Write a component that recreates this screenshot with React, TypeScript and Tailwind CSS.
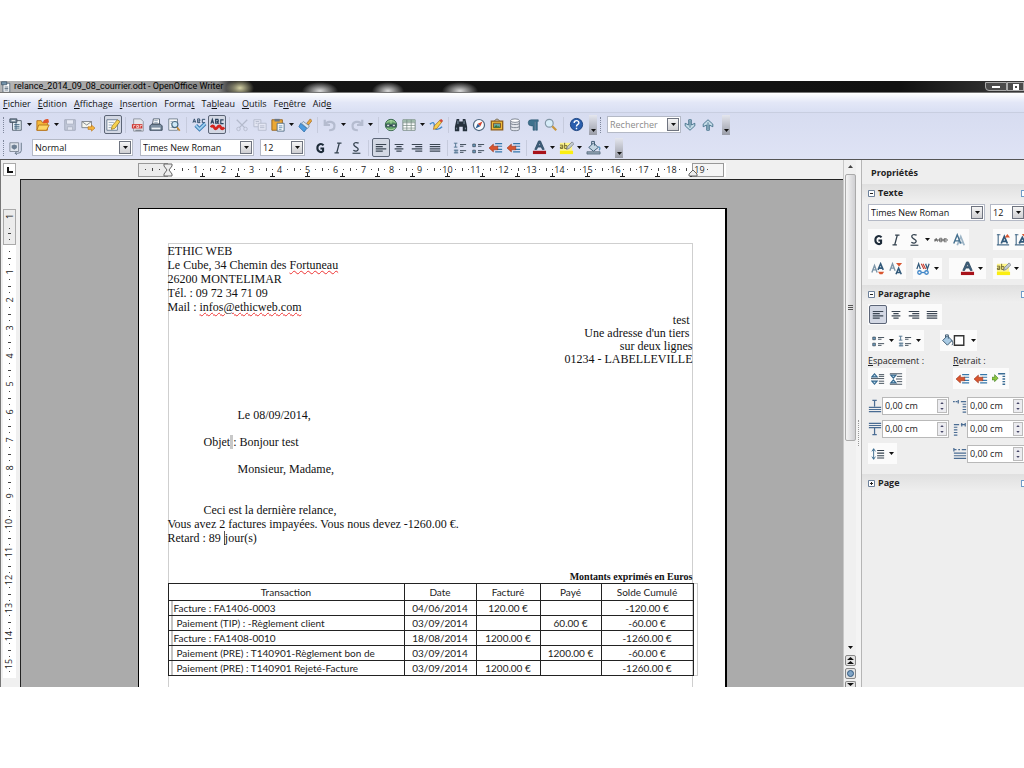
import React from "react";
import clsx from "clsx";

type IconProps = { children: React.ReactNode; className?: string };

function Icon({ children, className }: IconProps) {
  return (
    <svg
      viewBox="0 0 16 16"
      className={clsx("shrink-0", className || "h-[14px] w-[14px]")}
      fill="none"
      aria-hidden="true"
    >
      {children}
    </svg>
  );
}

function Caret() {
  return (
    <svg viewBox="0 0 5 3" className="h-[3px] w-[5px]" aria-hidden="true">
      <path d="M0 0h5L2.500 3z" fill="#111" />
    </svg>
  );
}

const icons = {
  newDoc: (
    <Icon>
      <path d="M4 3h10v11H4z" fill="#e3edf3" stroke="#4d5a68" />
      <path d="M1 1h8v4H1z" fill="#8296a6" stroke="#3c4a58" />
      <path d="M6 7.500h6M6 9.500h6M6 11.500h6" stroke="#41657e" />
      <path d="M8 5v9" stroke="#41657e" />
      <path d="M3 3h4" stroke="#fff" />
    </Icon>
  ),
  open: (
    <Icon>
      <path d="M1 3h5l1 2h6v9H1z" fill="#f5b93a" stroke="#b3701a" />
      <path d="M3 8h12l-3 6H1z" fill="#fcd765" stroke="#b3701a" />
      <path d="M8 6c0-4 2-5 6-5l1 4c-3 0-4 1-7 1z" fill="#e0552c" />
    </Icon>
  ),
  save: (
    <Icon className="h-[14px] w-[14px] opacity-60">
      <path d="M2 2h12v12H2z" fill="#b3bac8" stroke="#7b8495" />
      <path d="M4 2h8v5H4z" fill="#f2f4f8" stroke="#8f97a6" />
      <path d="M5 10h6v4H5z" fill="#e6e9f0" stroke="#8f97a6" />
    </Icon>
  ),
  mail: (
    <Icon>
      <path d="M1 4h11v7H1z" fill="#f6f6ee" stroke="#7a7f86" />
      <path d="M1 4l5.500 4L12 4" stroke="#7a7f86" />
      <path d="M8 10h4V8l4 3.500-4 3.500v-2H8z" fill="#f6b63c" stroke="#b87118" strokeWidth=".7" />
    </Icon>
  ),
  edit: (
    <Icon>
      <path d="M1 2h12v12H1z" fill="#fbfbfb" stroke="#60748a" />
      <path d="M3 5h6M3 8h4M3 11h3" stroke="#8aa2b6" />
      <path d="M6 13l1-4 6-7 3 2-6 8z" fill="#f6d24e" stroke="#8a6a1c" strokeWidth=".8" />
    </Icon>
  ),
  pdf: (
    <Icon>
      <path d="M3 1h8l3 3v11H3z" fill="#e4e7ec" stroke="#8a909b" />
      <path d="M1 7h12v5H1z" fill="#cf3a34" />
      <path d="M3 11V8.500h2M6.500 11V8.500h2V11zM10.500 11V8.500h2" stroke="#fff" strokeWidth=".8" />
      <path d="M5 14h7" stroke="#5c6672" />
    </Icon>
  ),
  print: (
    <Icon>
      <path d="M5 1h7v6H4z" fill="#fff" stroke="#4e5c6d" />
      <path d="M1 9l2-2h10l2 2v5H1z" fill="#7c8fa1" stroke="#2d3d4e" />
      <path d="M3 11h10v2H3z" fill="#eef2f5" />
      <path d="M6 3h4M6 5h4" stroke="#8da1b5" />
    </Icon>
  ),
  preview: (
    <Icon>
      <path d="M2 1h10v13H2z" fill="#f8f8f8" stroke="#6f7e8d" />
      <path d="M4 4h3M4 6h2M4 11h5" stroke="#9badc0" />
      <circle cx="9" cy="7.500" r="3.500" fill="#cfe8f7" stroke="#47687f" strokeWidth="1.300" />
      <path d="M11.500 10.500l3 4" stroke="#c68b34" strokeWidth="2" />
    </Icon>
  ),
  spell: (
    <Icon className="h-[15px] w-[15px]">
      <path d="M1 6l1.500-4L4 6M1.500 5h2M6 2v4h2.500L7 4h1.500L8 2zM14 2.500h-3V6h3" stroke="#2f4b66" />
      <path d="M4 9l4 4 6-6" stroke="#3a7ab2" strokeWidth="4" />
      <path d="M4 9l4 4 6-6" stroke="#9ed0f0" strokeWidth="2" />
    </Icon>
  ),
  autoSpell: (
    <Icon className="h-[15px] w-[15px]">
      <path d="M1 7l1.500-4.500L4 7M1.500 5.500h2M6 2.500v4h3L7.500 4.500H9l-.5-2zM14.500 3h-3v4h3" stroke="#27405a" strokeWidth="1.200" />
      <path d="M1 11q2-3 3.500 0t3.500 0 3.500 0 3.500 0" stroke="#d3251f" strokeWidth="3" />
    </Icon>
  ),
  cut: (
    <Icon className="h-[14px] w-[14px] opacity-40">
      <path d="M2 2l9 9M14 2L5 11" stroke="#7d8594" strokeWidth="1.500" />
      <circle cx="4" cy="12.500" r="2" stroke="#7d8594" />
      <circle cx="12" cy="12.500" r="2" stroke="#7d8594" />
    </Icon>
  ),
  copy: (
    <Icon className="h-[14px] w-[14px] opacity-40">
      <path d="M1 2h8v8H1z" fill="#f2f2f6" stroke="#7d8594" />
      <path d="M6 6h9v8H6z" fill="#f2f2f6" stroke="#7d8594" />
      <path d="M3 4h4M3 6h2M8 9h5M8 11h5" stroke="#7d8594" />
    </Icon>
  ),
  paste: (
    <Icon>
      <path d="M1 2h12v12H1z" fill="#eba834" stroke="#94601a" />
      <path d="M4 1h6v3H4z" fill="#6d7783" />
      <path d="M7 6h8v9H7z" fill="#f5f8fb" stroke="#4f6d86" />
      <path d="M9 9h4M9 11h4M9 13h3" stroke="#6b94b2" />
    </Icon>
  ),
  brush: (
    <Icon>
      <path d="M10 6l4-5 2 2-4 5z" fill="#e9a73a" stroke="#955f1c" strokeWidth=".7" />
      <path d="M6 4l7 5-2 3-7-6z" fill="#dce6ee" stroke="#52708a" strokeWidth=".7" />
      <path d="M3 6l7 6-3 4-6-6z" fill="#4b9ce0" stroke="#1f5c96" strokeWidth=".7" />
    </Icon>
  ),
  undo: (
    <Icon className="h-[14px] w-[14px] opacity-45">
      <path d="M2 2v6h6M2 8c3-6 12-4 11 2 0 3-3 4-6 4" stroke="#8a93a6" strokeWidth="2.500" />
    </Icon>
  ),
  redo: (
    <Icon className="h-[14px] w-[14px] opacity-45">
      <path d="M14 2v6H8M14 8C11 2 2 4 3 10c0 3 3 4 6 4" stroke="#8a93a6" strokeWidth="2.500" />
    </Icon>
  ),
  link: (
    <Icon>
      <circle cx="8" cy="8" r="6.500" fill="#66a66a" stroke="#2b5a42" />
      <path d="M3 5q5-4 10 0M3 12q5 3 10 0M8 2v4" stroke="#b7dfae" />
      <path d="M3 7h4v3H3zM9 7h4v3H9zM6 8.500h4" fill="#dce8dc" stroke="#22384a" />
    </Icon>
  ),
  table: (
    <Icon>
      <path d="M1 2h14v12H1z" fill="#fff" stroke="#71857e" />
      <path d="M1 2h14v3H1z" fill="#9fb9ab" />
      <path d="M1 5.500h14M1 8.500h14M1 11.500h14M5.500 2v12M10.500 2v12" stroke="#71857e" strokeWidth=".8" />
    </Icon>
  ),
  draw: (
    <Icon>
      <path d="M1 7q5-4 5 1t3 5 6-3" stroke="#3f86c8" strokeWidth="1.500" />
      <path d="M5 13l1-4 7-7 2 2-6 8z" fill="#f6cf4a" stroke="#a0651c" strokeWidth=".8" />
      <path d="M12 3l2-2 2 2-2 2z" fill="#d24a3a" />
    </Icon>
  ),
  find: (
    <Icon>
      <path d="M3 1h3v3h4V1h3l2 9v5h-5v-5H6v5H1v-5z" fill="#26313d" />
      <path d="M3 11v2M13 11v2M4.500 3v4M11.500 3v4" stroke="#8ba0b3" />
    </Icon>
  ),
  compass: (
    <Icon>
      <circle cx="8" cy="8" r="6.300" fill="#fafcff" stroke="#50677e" strokeWidth="1.400" />
      <path d="M12 4L9.500 9.500l-3-3z" fill="#d6432c" />
      <path d="M4 12l5.500-2.500-3-3z" fill="#2d5f95" />
    </Icon>
  ),
  gallery: (
    <Icon>
      <path d="M5 3l3-2 3 2" stroke="#6f5a2d" />
      <path d="M1.500 3.500h13v10h-13z" fill="#f1bd3a" stroke="#8d5d1c" strokeWidth="1.500" />
      <path d="M4 6h8v5H4z" fill="#69a7a0" stroke="#7e4e24" />
      <path d="M4 11l3-3 2 2 1-1 2 2z" fill="#36773b" />
    </Icon>
  ),
  database: (
    <Icon>
      <path d="M3 3v10c0 2 10 2 10 0V3" fill="#e2e5ea" stroke="#737c88" />
      <ellipse cx="8" cy="3" rx="5" ry="2" fill="#fff" stroke="#737c88" />
      <path d="M3 6c0 2 10 2 10 0M3 9.500c0 2 10 2 10 0" stroke="#737c88" />
    </Icon>
  ),
  pilcrow: (
    <Icon>
      <path d="M14 2H6a3.500 3.500 0 000 7h2v5h2V4h1v10h2V4h1z" fill="#3d718d" stroke="#26506b" strokeWidth=".6" />
    </Icon>
  ),
  zoom: (
    <Icon>
      <circle cx="6" cy="6" r="4.500" fill="#d6ecf8" stroke="#8296a6" strokeWidth="1.300" />
      <path d="M9.500 9.500L14 14" stroke="#c8963c" strokeWidth="2.500" />
    </Icon>
  ),
  help: (
    <Icon className="h-[15px] w-[15px]">
      <circle cx="8" cy="8" r="6.500" fill="#2a5fae" stroke="#183f7c" />
      <path d="M5.500 6.500c0-4 5.500-3 5 0-.3 1.500-2.500 1.500-2.500 3.500M8 11.500v1.500" stroke="#fff" strokeWidth="1.500" />
    </Icon>
  ),
  findNext: (
    <Icon>
      <path d="M6.500 2h3v6l4-2v3L8 14 2.500 9V6l4 2z" fill="#c5dce8" stroke="#3d6b85" />
      <path d="M8 3v8" stroke="#3d6b85" />
    </Icon>
  ),
  findPrev: (
    <Icon>
      <path d="M6.500 14h3V8l4 2V7L8 2 2.500 7v3l4-2z" fill="#c5dce8" stroke="#3d6b85" />
      <path d="M8 5v8" stroke="#3d6b85" />
    </Icon>
  ),
  styles: (
    <Icon>
      <path d="M1 2h10v10H1z" fill="#dfe4ec" stroke="#7b8594" />
      <path d="M3 8V5l3-1 3 1v3l-3 2z" fill="#6d7f93" />
      <path d="M14 2v9q0 3-4 3H7M9 12l-2 2 2 2" stroke="#5a6b7d" />
    </Icon>
  ),
  bold: (
    <Icon>
      <path d="M12 5C10 2.500 5 3 5 8s5 5.500 6.500 3.500V8.500H8.500" stroke="#1d2b39" strokeWidth="2.400" />
    </Icon>
  ),
  italic: (
    <Icon>
      <path d="M7 2.500h5M4 13.500h5M9.500 2.500l-3 11" stroke="#33414e" strokeWidth="1.500" />
    </Icon>
  ),
  underline: (
    <Icon>
      <path d="M11 2.500C8 1 5 2 5.500 4.500S11 7 10.500 9.500 7 12 5 10.500" stroke="#33414e" strokeWidth="1.500" />
      <path d="M4 14h9" stroke="#33414e" strokeWidth="1.300" />
    </Icon>
  ),
  alignLeft: (
    <Icon>
      <path d="M2 4h12M2 6.500h8M2 9h12M2 11.500h8" stroke="#3b4653" strokeWidth="1.300" />
    </Icon>
  ),
  alignCenter: (
    <Icon>
      <path d="M3 4h10M5 6.500h6M3 9h10M5 11.500h6" stroke="#3b4653" strokeWidth="1.300" />
    </Icon>
  ),
  alignRight: (
    <Icon>
      <path d="M2 4h12M6 6.500h8M2 9h12M6 11.500h8" stroke="#3b4653" strokeWidth="1.300" />
    </Icon>
  ),
  alignJustify: (
    <Icon>
      <path d="M2 4h12M2 6.500h12M2 9h12M2 11.500h12" stroke="#3b4653" strokeWidth="1.300" />
    </Icon>
  ),
  numbering: (
    <Icon>
      <path d="M1 2.500h4M3 2.500V7M1 7h4M1 10.500h5M1 13.500h5M2.500 10v4M4.500 10v4" stroke="#4b6f8c" />
      <path d="M8 4h7M8 6h4M8 11h7M8 13h4" stroke="#33414e" />
    </Icon>
  ),
  bullets: (
    <Icon>
      <path d="M2 3.500h3v3H2zM2 10.500h3v3H2z" fill="#6b9fc4" stroke="#33414e" strokeWidth=".8" />
      <path d="M8 4h7M8 6h4M8 11h7M8 13h4" stroke="#33414e" />
    </Icon>
  ),
  outdent: (
    <Icon>
      <path d="M7 3h8M9 6h6M9 9.500h6M7 12.500h8" stroke="#3577ab" strokeWidth="1.400" />
      <path d="M0 8l5-4.500v2.500h5v4H5v2.500z" fill="#d9552f" stroke="#8f2c16" strokeWidth=".6" />
    </Icon>
  ),
  fontColor: (
    <Icon className="h-[15px] w-[15px]">
      <path d="M3 10l4-9h2l4 9h-2l-1-2.500H6L5 10zM6.700 6h2.600L8 3z" fill="#41637f" stroke="#25415a" strokeWidth=".8" />
      <path d="M1 11.500h14v3.500H1z" fill="#a8121a" />
    </Icon>
  ),
  highlight: (
    <Icon className="h-[15px] w-[15px]">
      <path d="M1 3h13v12H1z" fill="#fdf58a" />
      <path d="M1 11.500h14v3.500H1z" fill="#fbee12" />
      <path d="M1 5.500h3V9H1.500V7.500H4M6 3v6h2.500V6H6" stroke="#5f5626" strokeWidth=".9" />
      <path d="M8 10l1-3 5-5 2 2-5 5z" fill="#c2cad0" stroke="#6b7178" strokeWidth=".7" />
    </Icon>
  ),
  fill: (
    <Icon className="h-[15px] w-[15px]">
      <path d="M3 8l5-5 5 5-5 4z" fill="#c4d6e3" stroke="#3a5770" />
      <path d="M6 5V1.500h3V6" stroke="#3a5770" />
      <path d="M13 7q3 1 1 4" stroke="#5b94bd" strokeWidth="1.500" />
      <path d="M1 12.500h14V15H1z" fill="#8fa3b4" stroke="#45586a" strokeWidth=".7" />
    </Icon>
  ),
  strike: (
    <Icon>
      <path d="M1 10l1.500-4L4 10M6.500 6v4h2.500V6zM14.500 6.500h-3V10h3" stroke="#555" strokeWidth=".9" />
      <path d="M0 8h16" stroke="#444" />
    </Icon>
  ),
  shadow: (
    <Icon>
      <path d="M6 14l4-10 4 10M7.500 11h5" stroke="#9fb6c7" strokeWidth="2" />
      <path d="M2 12l4-10 4 10M3.500 9h5" stroke="#45708f" strokeWidth="1.600" />
    </Icon>
  ),
  grow: (
    <Icon>
      <path d="M2.500 1v13M1 2h4M1 13.500h14" stroke="#4b6f8c" strokeWidth="1.300" />
      <path d="M6 12l3.500-8 3.500 8M7 9.500h5" stroke="#31597a" strokeWidth="2" />
      <path d="M10 5l3-4 3 4z" fill="#d9552f" />
    </Icon>
  ),
  shrink: (
    <Icon>
      <path d="M2.500 1v13M1 2h4M1 13.500h14" stroke="#4b6f8c" strokeWidth="1.300" />
      <path d="M6 12l3.500-7 3.500 7M7 10h5" stroke="#31597a" strokeWidth="2" />
      <path d="M9 1h6l-3 4z" fill="#d9552f" />
    </Icon>
  ),
  superscript: (
    <Icon>
      <path d="M1 12l3-8 3 8M2 9h4" stroke="#7d96a9" strokeWidth="1.600" />
      <path d="M8 9l3-7 3 7M9 7h4" stroke="#31597a" strokeWidth="1.800" />
      <path d="M8 11h7l-2 3h-3z" fill="#d9552f" />
    </Icon>
  ),
  subscript: (
    <Icon>
      <path d="M1 10l3-8 3 8M2 7h4" stroke="#7d96a9" strokeWidth="1.600" />
      <path d="M8 14l3-7 3 7M9 12h4" stroke="#31597a" strokeWidth="1.800" />
      <path d="M8 1h7l-3.500 4z" fill="#d9552f" />
    </Icon>
  ),
  spacing: (
    <Icon>
      <path d="M1 8l2-6 2 6M11 2l2 6 2-6" stroke="#31597a" strokeWidth="1.400" />
      <path d="M6 2l3 6M8 2l3 6" stroke="#c43a2c" strokeWidth="1.200" />
      <circle cx="4" cy="12" r="2" stroke="#3f86c8" strokeWidth="1.500" />
      <circle cx="12" cy="12" r="2" stroke="#3f86c8" strokeWidth="1.500" />
      <path d="M6 12h4" stroke="#3f86c8" strokeWidth="1.500" />
    </Icon>
  ),
  backColor: (
    <Icon className="h-[15px] w-[24px]">
      <path d="M-3 8l5-5 5 5-5 5z" fill="#a9cbe4" stroke="#3a5770" />
      <path d="M0 5V2h3v4M6 8q3 1 1 5" stroke="#3a5770" />
      <path d="M9.500 3h10v10h-10z" fill="#fff" stroke="#333" strokeWidth="1.500" />
    </Icon>
  ),
  increaseSpace: (
    <Icon>
      <path d="M4 2l3 3.500H1zM4 14l3-3.500H1z" fill="#b8d8ec" stroke="#31658c" strokeWidth="1.300" />
      <path d="M0 7.500h15M9 3h6M9 5h6M9 10.500h6M9 13h6" stroke="#33414e" />
    </Icon>
  ),
  decreaseSpace: (
    <Icon>
      <path d="M5 7L2 3.500h6zM5 9l-3 3.500h6z" fill="#b8d8ec" stroke="#31658c" strokeWidth="1.300" />
      <path d="M1 2h14M1 14h14M9 5h6M8 8h7M9 11h6" stroke="#33414e" />
    </Icon>
  ),
  hanging: (
    <Icon>
      <path d="M0 6h3V3l4 4-4 4V9H0z" fill="#8cc63f" stroke="#3f7d1e" strokeWidth=".7" />
      <path d="M7 2h8M12 5h3M12 8h3M12 11h3M12 14h3" stroke="#3a6c94" strokeWidth="1.500" />
    </Icon>
  ),
  above: (
    <Icon>
      <path d="M5 1.500h5M7.500 1.500v7M1 9.500h14M1 12h14M1 14.500h14" stroke="#4a6c93" strokeWidth="1.400" />
    </Icon>
  ),
  below: (
    <Icon>
      <path d="M1 1.500h14M1 4h14M1 6.500h14M7.500 7v7M5 14.500h5" stroke="#4a6c93" strokeWidth="1.400" />
    </Icon>
  ),
  before: (
    <Icon>
      <path d="M0 3h2M3 3h2M6 1v4M9 3h6M11 6h4M11 9h4M11 12h4M11 15h4" stroke="#4a6c93" strokeWidth="1.400" />
    </Icon>
  ),
  after: (
    <Icon>
      <path d="M1 3h6M1 6h4M1 9h4M1 12h4M1 15h4M9 3h5M10 1v4M14 1v4" stroke="#4a6c93" strokeWidth="1.400" />
    </Icon>
  ),
  firstLine: (
    <Icon>
      <path d="M1 3h3M6 3h2M10 3h5M1 1v4M1 7h14M1 10h14M1 13h14" stroke="#4a6c93" strokeWidth="1.400" />
    </Icon>
  ),
  lineSpacing: (
    <Icon>
      <path d="M3 2v12M1 5l2-3 2 3M1 11l2 3 2-3" stroke="#31658c" />
      <path d="M7 4h8M7 7h8M7 10h8M7 12.500h8" stroke="#33414e" strokeWidth="1.200" />
    </Icon>
  ),
};

type IconName = keyof typeof icons;

type ToolProps = { icon: IconName; label: string; pressed?: boolean; menu?: boolean };

function Tool({ icon, label, pressed, menu }: ToolProps) {
  return (
    <>
      <button
        type="button"
        aria-label={label}
        aria-pressed={pressed}
        className={clsx(
          "flex h-[19px] w-[18px] shrink-0 items-center justify-center",
          pressed && "rounded-xs border border-[#5c6577] bg-[#d3d8e4]"
        )}
      >
        {icons[icon]}
      </button>
      {menu && (
        <button
          type="button"
          aria-label={`${label} : options`}
          className="flex h-[19px] w-[9px] shrink-0 items-center justify-center"
        >
          <Caret />
        </button>
      )}
    </>
  );
}

function Separator() {
  return (
    <span className="flex h-4 w-[7px] shrink-0 justify-center">
      <span className="w-px bg-[#c6cbdd]" />
    </span>
  );
}

function Grip() {
  return (
    <span className="flex w-[7px] shrink-0 pl-[3px]">
      <span className="h-4 border-l border-dotted border-[#7f879c]" />
    </span>
  );
}

function Overflow() {
  return (
    <button
      type="button"
      aria-label="Autres boutons"
      className="flex h-[20px] w-2 shrink-0 items-end justify-center bg-linear-to-b from-[#e4e6ee] to-[#9a9da8] pb-[3px]"
    >
      <Caret />
    </button>
  );
}

type ComboProps = { label: string; value: string; className?: string };

function Combo({ label, value, className }: ComboProps) {
  return (
    <span className={clsx("flex h-[17px] shrink-0 border border-[#b4b9c6] bg-white p-px", className)}>
      <select
        aria-label={label}
        defaultValue={value}
        className="w-full min-w-0 flex-1 appearance-none bg-transparent pl-px text-[9px] leading-[13px] outline-none"
      >
        <option>{value}</option>
      </select>
      <span className="pointer-events-none flex w-3 shrink-0 items-center justify-center border border-[#6f7480] bg-linear-to-b from-[#f6f6f6] to-[#cfcfd2]">
        <Caret />
      </span>
    </span>
  );
}

const menus: [string, string, string][] = [
  ["", "F", "ichier"],
  ["", "É", "dition"],
  ["", "A", "ffichage"],
  ["", "I", "nsertion"],
  ["Forma", "t", ""],
  ["Ta", "b", "leau"],
  ["", "O", "utils"],
  ["Fe", "n", "être"],
  ["Aid", "e", ""],
];

function TitleBar() {
  return (
    <header className="flex h-[11px] items-center overflow-hidden bg-[radial-gradient(ellipse_14px_9px_at_240px_7px,#d4d1a4,transparent),radial-gradient(ellipse_18px_9px_at_320px_10px,#ddd,transparent),radial-gradient(ellipse_16px_9px_at_388px_10px,#ddd,transparent),radial-gradient(ellipse_18px_9px_at_460px_10px,#ddd,transparent),linear-gradient(90deg,#b5b5b5,#a2a2a2_130px,#858585_218px,#161616_236px,#111_900px,#3a3a3a)]">
      <Icon className="h-[12px] w-[12px]">
        <path d="M4 3h9v12H4z" fill="#fff" stroke="#3d5468" />
        <path d="M2 1h7v4H2z" fill="#7595ac" stroke="#3d5468" />
        <path d="M6 8h5M6 10h5M6 12h5" stroke="#3d5468" />
      </Icon>
      <h1 className="pl-[2px] font-['Roboto',sans-serif] text-[9px] leading-[11px] whitespace-nowrap text-black">
        relance_2014_09_08_courrier.odt - OpenOffice Writer
      </h1>
      <div className="ml-auto flex">
        <button
          type="button"
          aria-label="Réduire"
          className="flex h-[9px] w-[22px] items-center justify-center rounded-bl-sm border border-[#aaa] bg-[#4b4b4b]"
        >
          <span className="h-[2px] w-2 bg-white" />
        </button>
        <button
          type="button"
          aria-label="Agrandir"
          className="flex h-[9px] w-[17px] items-center justify-center border border-[#aaa] bg-[#4b4b4b]"
        >
          <span className="h-[6px] w-[6px] border-2 border-white" />
        </button>
      </div>
    </header>
  );
}

function Toolbars() {
  return (
    <div className="border-b border-[#555] bg-linear-to-b from-[#d3d9ee] to-[#dfe3f5]">
      <nav className="flex h-[21px] items-center gap-[7px] border-t border-[#777] border-b border-b-[#c8cee0] bg-linear-to-b from-white via-[#e3e7f7] to-[#d9dff3] px-[3px] pt-[2px]">
        {menus.map(([before, key, after]) => (
          <button key={before + key + after} type="button" className="text-[9px] leading-[12px] text-[#111]">
            {before}
            <span className="underline">{key}</span>
            {after}
          </button>
        ))}
      </nav>

      <div className="flex h-[23px] items-center">
        <Grip />
        <Tool icon="newDoc" label="Nouveau" menu />
        <Tool icon="open" label="Ouvrir" menu />
        <Tool icon="save" label="Enregistrer" />
        <Tool icon="mail" label="Document par e-mail" />
        <Separator />
        <Tool icon="edit" label="Éditer le fichier" pressed />
        <Separator />
        <Tool icon="pdf" label="Exporter au format PDF" />
        <Tool icon="print" label="Imprimer" />
        <Tool icon="preview" label="Aperçu" />
        <Separator />
        <Tool icon="spell" label="Orthographe et grammaire" />
        <Tool icon="autoSpell" label="Vérification automatique" pressed />
        <Separator />
        <Tool icon="cut" label="Couper" />
        <Tool icon="copy" label="Copier" />
        <Tool icon="paste" label="Coller" menu />
        <Tool icon="brush" label="Appliquer le format" />
        <Separator />
        <Tool icon="undo" label="Annuler" menu />
        <Tool icon="redo" label="Restaurer" menu />
        <Separator />
        <Tool icon="link" label="Hyperlien" />
        <Tool icon="table" label="Tableau" menu />
        <Tool icon="draw" label="Dessin" />
        <Separator />
        <Tool icon="find" label="Rechercher et remplacer" />
        <Tool icon="compass" label="Navigateur" />
        <Tool icon="gallery" label="Gallery" />
        <Tool icon="database" label="Sources de données" />
        <Tool icon="pilcrow" label="Caractères non imprimables" />
        <Tool icon="zoom" label="Zoom" />
        <Separator />
        <Tool icon="help" label="Aide" />
        <span className="pl-1">
          <Overflow />
        </span>
        <Grip />
        <span className="ml-[3px] flex h-[17px] w-[74px] border border-[#b4b9c6] bg-white p-px">
          <input
            type="text"
            aria-label="Rechercher"
            placeholder="Rechercher"
            className="min-w-0 flex-1 pl-px text-[9px] leading-[13px] outline-none placeholder:text-[#8b8b8b]"
          />
          <button
            type="button"
            aria-label="Recherches récentes"
            className="flex w-3 items-center justify-center border border-[#6f7480] bg-linear-to-b from-[#f6f6f6] to-[#cfcfd2]"
          >
            <Caret />
          </button>
        </span>
        <Tool icon="findNext" label="Suivant" />
        <Tool icon="findPrev" label="Précédent" />
        <span className="pl-[5px]">
          <Overflow />
        </span>
      </div>

      <div className="flex h-[23px] items-center">
        <Grip />
        <Tool icon="styles" label="Styles et formatage" />
        <Combo label="Appliquer le style" value="Normal" className="ml-[7px] w-[101px]" />
        <Combo label="Nom de police" value="Times New Roman" className="ml-[7px] w-[114px]" />
        <Combo label="Taille de police" value="12" className="ml-[6px] w-[45px]" />
        <span className="flex pl-[6px]">
          <Tool icon="bold" label="Gras" />
          <Tool icon="italic" label="Italique" />
          <Tool icon="underline" label="Souligné" />
        </span>
        <Separator />
        <Tool icon="alignLeft" label="Aligner à gauche" pressed />
        <Tool icon="alignCenter" label="Centrer" />
        <Tool icon="alignRight" label="Aligner à droite" />
        <Tool icon="alignJustify" label="Justifier" />
        <Separator />
        <Tool icon="numbering" label="Numérotation" />
        <Tool icon="bullets" label="Puces" />
        <Tool icon="outdent" label="Diminuer le retrait" />
        <Tool icon="outdent" label="Augmenter le retrait" />
        <Separator />
        <Tool icon="fontColor" label="Couleur de police" menu />
        <Tool icon="highlight" label="Surlignage" menu />
        <Tool icon="fill" label="Arrière-plan" menu />
        <span className="pl-1">
          <Overflow />
        </span>
      </div>
    </div>
  );
}

const range = (n: number) => Array.from({ length: n }, (_, i) => i + 1);

function HorizontalRuler() {
  return (
    <div className="relative mx-auto flex h-[14px] w-[588px] bg-white text-[9px] leading-[14px] text-[#222]">
      <span className="flex w-[30px] shrink-0 items-center justify-around border border-[#999] bg-[#ececec] px-1">
        <i className="h-px w-px bg-[#444]" />
        <i className="h-[3px] w-px bg-[#444]" />
        <i className="h-px w-px bg-[#444]" />
      </span>
      <span className="flex w-[14px] shrink-0 items-center justify-center">
        <i className="h-px w-px bg-[#444]" />
      </span>
      {range(19).map((n) => (
        <span key={n} className="grid w-7 shrink-0 grid-cols-[7px_14px_7px] items-center">
          <span className="flex items-center justify-between">
            <i className="h-[3px] w-px bg-[#444]" />
            <i className="h-px w-px bg-[#444]" />
          </span>
          <span className="flex justify-center">{n}</span>
          <i className="h-px w-px bg-[#444]" />
        </span>
      ))}
      {/* default tab stops */}
      <div className="absolute bottom-0 left-[47px] flex">
        {range(15).map((n) => (
          <svg key={n} viewBox="0 0 35 4" className="h-1 w-[35px]" aria-hidden="true">
            <path d="M17.500 0v3M15 3.500h5" stroke="#222" />
          </svg>
        ))}
      </div>
      <span className="absolute inset-y-0 right-[2px] w-[32px] border border-[#999] bg-[#999]/10" />
      {/* indent markers */}
      <svg viewBox="0 0 10 14" className="absolute left-[25px] h-[14px] w-[10px]" aria-hidden="true">
        <path d="M1 1h8v2L6 7l3 4v2H1v-2l3-4-3-4z" fill="#eee" stroke="#666" />
      </svg>
      <svg viewBox="0 0 10 14" className="absolute right-[28px] h-[14px] w-[10px]" aria-hidden="true">
        <path d="M5 7l4 4v2H1v-2z" fill="#eee" stroke="#666" />
      </svg>
    </div>
  );
}

function VerticalRuler() {
  return (
    <div className="flex w-5 shrink-0 flex-col border-l border-[#777] bg-[#f0f0f0] pt-[30px] pl-[2px]">
      <div className="flex w-[13px] flex-col bg-white text-[9px] leading-[13px] text-[#222]">
        <span className="flex h-9 flex-col items-center justify-between border border-[#aaa] bg-[#ececec] pb-1">
          <span className="-rotate-90">1</span>
          <i className="h-px w-px bg-[#444]" />
          <i className="h-px w-[3px] bg-[#444]" />
          <i className="h-px w-px bg-[#444]" />
        </span>
        <span className="flex h-[13px] items-center justify-center">
          <i className="h-px w-px bg-[#444]" />
        </span>
        {range(15).map((n) => (
          <span key={n} className="grid h-7 grid-rows-[7px_14px_7px] justify-items-center">
            <span className="flex flex-col items-center justify-between">
              <i className="h-px w-[3px] bg-[#444]" />
              <i className="h-px w-px bg-[#444]" />
            </span>
            <span className="-rotate-90">{n}</span>
            <i className="h-px w-px bg-[#444]" />
          </span>
        ))}
      </div>
    </div>
  );
}

const rows = [
  { label: "Facture : FA1406-0003", date: "04/06/2014", billed: "120.00 €", paid: "", total: "-120.00 €" },
  { label: "Paiement (TIP) : -Règlement client", date: "03/09/2014", billed: "", paid: "60.00 €", total: "-60.00 €" },
  { label: "Facture : FA1408-0010", date: "18/08/2014", billed: "1200.00 €", paid: "", total: "-1260.00 €" },
  { label: "Paiement (PRE) : T140901-Règlement bon de", date: "03/09/2014", billed: "", paid: "1200.00 €", total: "-60.00 €" },
  { label: "Paiement (PRE) : T140901 Rejeté-Facture", date: "03/09/2014", billed: "1200.00 €", paid: "", total: "-1260.00 €" },
];

function InvoiceTable() {
  return (
    <div className="-mr-[6px] flex">
      <table className="w-[526px] table-fixed border-collapse text-center font-['Lato',sans-serif] text-[10px] leading-[14px] text-[#222]">
        <colgroup>
          <col className="w-[236px]" />
          <col className="w-[72px]" />
          <col className="w-[64px]" />
          <col className="w-[61px]" />
          <col />
        </colgroup>
        <thead>
          <tr className="h-[17px]">
            {["Transaction", "Date", "Facturé", "Payé", "Solde Cumulé"].map((title) => (
              <th key={title} className="border border-[#222] p-0 font-normal">
                {title}
              </th>
            ))}
          </tr>
        </thead>
        <tbody>
          {rows.map((row) => (
            <tr key={row.label}>
              <td className="border border-[#222] p-0 text-left">
                <span
                  className={clsx(
                    "ml-[2px] block border-l-2 border-[#c4c4c4]",
                    row.label.startsWith("Paiement") ? "pl-[4px]" : "pl-px"
                  )}
                >
                  {row.label}
                </span>
              </td>
              <td className="border border-[#222] p-0">{row.date}</td>
              <td className="border border-[#222] p-0">{row.billed}</td>
              <td className="border border-[#222] p-0">{row.paid}</td>
              <td className="border border-[#222] p-0">{row.total}</td>
            </tr>
          ))}
        </tbody>
      </table>
      <span className="w-1 border-y border-r border-[#ccc]" />
    </div>
  );
}

function Letter() {
  return (
    <article className="mx-auto w-[589px] border border-r-2 border-b-0 border-black bg-white px-[29px] pt-[34px] font-['Liberation_Serif',serif] text-[12px] leading-[14px] text-[#111]">
      <div className="w-[525px] border border-b-0 border-[#cfcfcf] pb-[11px]">
        <div className="-mx-px">
          <p>ETHIC WEB</p>
          <p>
            Le Cube, 34 Chemin des{" "}
            <span className="underline decoration-[#e33] decoration-wavy decoration-1">Fortuneau</span>
          </p>
          <p>26200 MONTELIMAR</p>
          <p>Tél. : 09 72 34 71 09</p>
          <p>
            Mail : <span className="underline decoration-[#e33] decoration-wavy decoration-1">infos@ethicweb.com</span>
          </p>
          <div className="text-right leading-[13px] whitespace-pre">
            <p>{"test "}</p>
            <p>{"Une adresse d'un tiers "}</p>
            <p>sur deux lignes</p>
            <p>01234 - LABELLEVILLE</p>
          </div>
          <p className="pt-[42px] pl-[70px]">Le 08/09/2014,</p>
          <p className="pt-[13px] pl-[36px]">
            Objet<span className="bg-[#c8c8c8]">&nbsp;</span>: Bonjour test
          </p>
          <p className="pt-[13px] pl-[70px]">Monsieur, Madame,</p>
          <p className="pt-[27px] pl-[36px]">Ceci est la dernière relance,</p>
          <p>Vous avez 2 factures impayées. Vous nous devez -1260.00 €.</p>
          <p>
            Retard : 89 <span className="border-l border-[#555]">jour(s)</span>
          </p>
          <p className="pt-[25px] text-right text-[10px] leading-[13px] font-bold">Montants exprimés en Euros</p>
          <InvoiceTable />
        </div>
      </div>
    </article>
  );
}

function ScrollBar() {
  return (
    <div className="flex w-[13px] shrink-0 flex-col items-center border-l border-[#c8c8c8] bg-[#f0f0f0] pt-[5px]">
      <svg viewBox="0 0 5 3" className="h-[3px] w-[5px]" aria-hidden="true">
        <path d="M0 3h5L2.500 0z" fill="#444" />
      </svg>
      <div className="mt-[6px] flex h-[267px] w-[11px] flex-col items-center justify-center gap-px rounded-xs border border-[#aaa] bg-linear-to-r from-[#f4f4f4] to-[#cfcfd2]">
        <i className="h-px w-[5px] bg-[#555]" />
        <i className="h-px w-[5px] bg-[#555]" />
        <i className="h-px w-[5px] bg-[#555]" />
      </div>
      <div className="mt-auto flex flex-col items-center gap-[2px]">
        <span className="pb-1">
          <Caret />
        </span>
        <button
          type="button"
          aria-label="Page précédente"
          className="flex h-[11px] w-[11px] items-center justify-center rounded-xs border border-[#888] bg-[#e4e4e4]"
        >
          <svg viewBox="0 0 7 8" className="h-2 w-[7px]" aria-hidden="true">
            <path d="M3.500 0L7 3H0zM3.500 4L7 7H0z" fill="#111" />
          </svg>
        </button>
        <button
          type="button"
          aria-label="Navigation"
          className="flex h-[11px] w-[11px] items-center justify-center rounded-xs border border-[#888] bg-[#e4e4e4]"
        >
          <span className="h-[7px] w-[7px] rounded-full border border-[#335a80] bg-[#7fa3c4]" />
        </button>
        <button
          type="button"
          aria-label="Page suivante"
          className="flex h-[6px] w-[11px] items-start justify-center overflow-hidden rounded-t-xs border border-b-0 border-[#888] bg-[#e4e4e4]"
        >
          <svg viewBox="0 0 7 8" className="h-2 w-[7px] shrink-0" aria-hidden="true">
            <path d="M0 1h7L3.500 4zM0 5h7L3.500 8z" fill="#111" />
          </svg>
        </button>
      </div>
    </div>
  );
}

function SectionTitle({ title, open }: { title: string; open?: boolean }) {
  return (
    <h3 className="flex h-[18px] items-center gap-[3px] bg-linear-to-b from-[#e0e0e0] to-[#efefef] pl-[6px] text-[9px] font-bold text-[#222]">
      <svg viewBox="0 0 7 7" className="h-[7px] w-[7px]" aria-hidden="true">
        <path d="M.5.5h6v6h-6z" fill="#fff" stroke="#6b7f99" />
        <path d={open ? "M2 3.500h3" : "M2 3.500h3M3.500 2v3"} stroke="#222" />
      </svg>
      {title}
      <span className="ml-auto h-[7px] w-[3px] border border-r-0 border-[#6f9cc9] bg-white" />
    </h3>
  );
}

function Group({ children }: { children: React.ReactNode }) {
  return <div className="flex h-[21px] shrink-0 items-center bg-[#fbfbfb] px-px">{children}</div>;
}

function Spin({ icon, label, className }: { icon: IconName; label: string; className: string }) {
  return (
    <span className="flex shrink-0 items-center">
      {icons[icon]}
      <span className={clsx("flex h-[18px] shrink-0 border border-[#b9b9b9] bg-white p-px", className)}>
        <input
          type="text"
          aria-label={label}
          defaultValue="0,00 cm"
          className="min-w-0 flex-1 pl-px text-[9px] leading-[14px] text-[#222] outline-none"
        />
        <span className="flex w-[10px] shrink-0 flex-col items-center justify-around border border-[#bbb] bg-[#ececf0]">
          <svg viewBox="0 0 5 3" className="h-[2px] w-[4px]" aria-hidden="true">
            <path d="M0 3h5L2.500 0z" fill="#446" />
          </svg>
          <svg viewBox="0 0 5 3" className="h-[2px] w-[4px]" aria-hidden="true">
            <path d="M0 0h5L2.500 3z" fill="#446" />
          </svg>
        </span>
      </span>
    </span>
  );
}

function Sidebar() {
  return (
    <aside className="w-[163px] shrink-0 overflow-hidden border-l border-[#b5b5b5] bg-[#eee]">
      <h2 className="flex h-6 items-center pt-px pl-[9px] text-[9px] font-bold text-[#222]">Propriétés</h2>

      <SectionTitle title="Texte" open />
      <div className="flex flex-col gap-2 pt-[2px] pb-[6px] pl-[6px]">
        <div className="flex gap-[5px]">
          <Combo label="Police" value="Times New Roman" className="w-[117px]" />
          <Combo label="Taille" value="12" className="w-[36px]" />
        </div>
        <div className="flex gap-6">
          <Group>
            <Tool icon="bold" label="Gras" />
            <Tool icon="italic" label="Italique" />
            <Tool icon="underline" label="Souligné" menu />
            <Tool icon="strike" label="Barré" />
            <Tool icon="shadow" label="Ombre" />
          </Group>
          <Group>
            <Tool icon="grow" label="Agrandir la police" />
            <Tool icon="shrink" label="Réduire la police" />
          </Group>
        </div>
        <div className="flex gap-[7px]">
          <Group>
            <Tool icon="superscript" label="Exposant" />
            <Tool icon="subscript" label="Indice" />
          </Group>
          <Group>
            <Tool icon="spacing" label="Espacement des caractères" menu />
          </Group>
          <Group>
            <span className="w-2" />
            <Tool icon="fontColor" label="Couleur de police" menu />
          </Group>
          <Group>
            <Tool icon="highlight" label="Surlignage" menu />
          </Group>
        </div>
      </div>

      <SectionTitle title="Paragraphe" open />
      <div className="flex flex-col gap-[5px] pt-px pb-[10px] pl-[6px]">
        <div className="flex">
          <Group>
            <Tool icon="alignLeft" label="Aligner à gauche" pressed />
            <Tool icon="alignCenter" label="Centrer" />
            <Tool icon="alignRight" label="Aligner à droite" />
            <Tool icon="alignJustify" label="Justifier" />
          </Group>
        </div>
        <div className="flex gap-4">
          <Group>
            <Tool icon="bullets" label="Puces" menu />
            <Tool icon="numbering" label="Numérotation" menu />
          </Group>
          <Group>
            <button type="button" aria-label="Couleur d'arrière-plan" className="flex h-[19px] items-center gap-[6px]">
              {icons.backColor}
              <Caret />
            </button>
          </Group>
        </div>
        <div className="flex text-[9px] leading-[10px] text-[#222]">
          <div className="w-[85px] shrink-0">
            <p>
              <span className="underline">E</span>spacement :
            </p>
            <div className="flex pt-[2px]">
              <Group>
                <Tool icon="increaseSpace" label="Augmenter l'espacement" />
                <Tool icon="decreaseSpace" label="Diminuer l'espacement" />
              </Group>
            </div>
          </div>
          <div>
            <p>
              <span className="underline">R</span>etrait :
            </p>
            <div className="flex pt-[2px]">
              <Group>
                <Tool icon="outdent" label="Augmenter le retrait" />
                <Tool icon="outdent" label="Diminuer le retrait" />
                <Tool icon="hanging" label="Retrait négatif" />
              </Group>
            </div>
          </div>
        </div>
        <div className="flex gap-1 pt-[3px]">
          <Spin icon="above" label="Espacement au-dessus" className="w-[67px]" />
          <Spin icon="before" label="Retrait avant le texte" className="w-[58px]" />
        </div>
        <div className="flex gap-1">
          <Spin icon="below" label="Espacement en dessous" className="w-[67px]" />
          <Spin icon="after" label="Retrait après le texte" className="w-[58px]" />
        </div>
        <div className="flex">
          <div className="flex w-[85px] shrink-0">
            <Group>
              <Tool icon="lineSpacing" label="Interligne" menu />
            </Group>
          </div>
          <Spin icon="firstLine" label="Retrait de première ligne" className="w-[58px]" />
        </div>
      </div>

      <SectionTitle title="Page" />
    </aside>
  );
}

export default function App() {
  return (
    <div className="min-h-screen overflow-x-hidden bg-white py-[81px] font-['Open_Sans',sans-serif] text-[#111]">
      <TitleBar />
      <Toolbars />
      <main className="flex">
        <div className="flex min-w-0 flex-1 flex-col">
          <div className="flex h-[19px] items-center border-l border-[#777] bg-[#f0f0f0]">
            <button
              type="button"
              aria-label="Type de tabulation"
              className="ml-[2px] flex h-[13px] w-[13px] shrink-0 items-center justify-center border border-[#aaa] bg-white"
            >
              <svg viewBox="0 0 6 6" className="h-[6px] w-[6px]" aria-hidden="true">
                <path d="M1 0v5h5" stroke="#111" strokeWidth="2" fill="none" />
              </svg>
            </button>
            <div className="min-w-0 flex-1 pl-1">
              <HorizontalRuler />
            </div>
          </div>
          <div className="flex flex-1">
            <VerticalRuler />
            <section className="min-w-0 flex-1 border-t border-l border-[#222] bg-[#ababab] pt-7">
              <Letter />
            </section>
          </div>
        </div>
        <ScrollBar />
        <div className="flex w-[5px] shrink-0 flex-col bg-[#f4f4f4] pt-[260px] pl-[2px]">
          <span className="h-[26px] border-l border-dotted border-[#999]" />
        </div>
        <Sidebar />
      </main>
    </div>
  );
}
